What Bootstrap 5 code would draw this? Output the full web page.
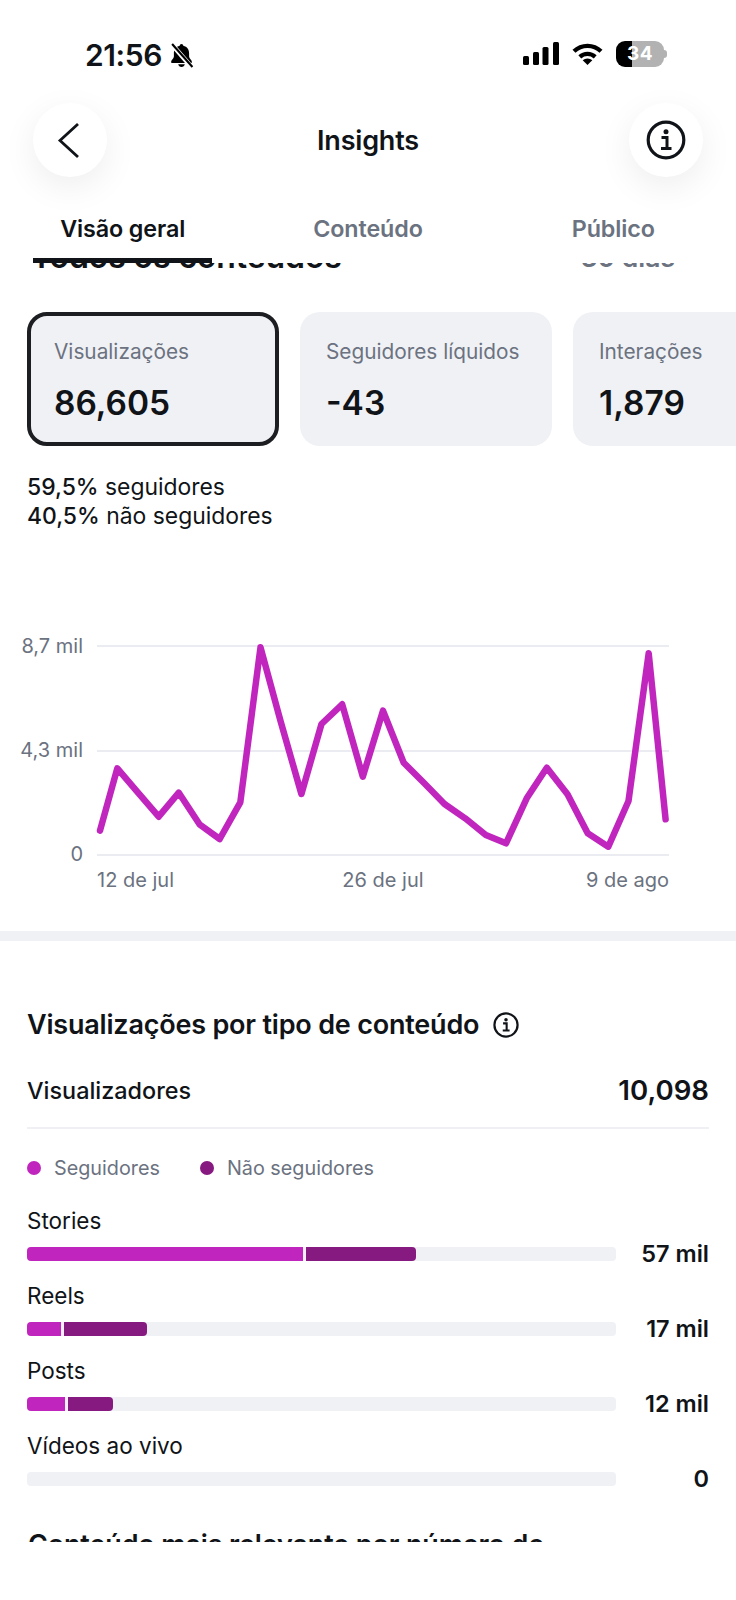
<!DOCTYPE html>
<html lang="pt">
<head>
<meta charset="utf-8">
<title>Insights</title>
<link href="https://cdn.jsdelivr.net/npm/bootstrap@5.3.0/dist/css/bootstrap.min.css" rel="stylesheet">
<style>
html,body{margin:0;background:#fff;}
body{font-family:Inter,"Liberation Sans",sans-serif;color:#101418;width:736px;height:1600px;overflow:hidden;}
.app-top{height:263px;position:relative;z-index:2;background:#fff;}
.stat-bar{height:95px;padding:41px 72px 0 85px;}
.stat-time{font-size:30px;font-weight:600;line-height:28px;letter-spacing:-.4px;margin-right:7px;}
.stat-right{gap:13px;}
.batt{width:48px;height:26px;border-radius:9px;background:linear-gradient(90deg,#000 34%,#b2b2b2 34%);color:#fff;font-size:19px;font-weight:700;line-height:26px;text-align:center;position:relative;letter-spacing:.5px;}
.batt::after{content:"";position:absolute;left:48px;top:9px;width:3px;height:8px;background:#b2b2b2;border-radius:0 3px 3px 0;}
.head-row{height:74px;margin-top:8px;padding:0 33px;}
.round-btn{width:74px;height:74px;border-radius:50%;background:#fff;box-shadow:0 10px 34px rgba(0,0,0,.07);border:0;padding:0;}
.head-title{font-size:27px;font-weight:600;letter-spacing:-.2px;padding-top:2px;}
.tab-row{margin-top:37px;}
.tab-item{flex:1 1 0;text-align:center;padding:0;}
.tab-lbl{display:block;font-size:23.3px;font-weight:600;line-height:30px;color:#6b7280;letter-spacing:-.1px;}
.tab-item.on .tab-lbl{color:#101418;}
.tab-bar{display:block;height:5px;width:179px;margin:14px 0 0 33px;background:#101418;}
.tab-gap{display:block;height:5px;margin-top:14px;}
.scroll-view{height:1280px;overflow:hidden;border-top:1px solid #eceef1;margin-top:-1px;position:relative;z-index:1;}
.top-cut{margin-top:-21px;padding:0 61px 0 31px;font-weight:600;line-height:30px;}
.top-cut .a{font-size:32px;letter-spacing:-.1px;}
.top-cut .b{font-size:26.5px;color:#6b7280;}
.kpi-row{margin-top:40px;padding-left:27px;gap:21px;overflow:hidden;}
.kpi{flex:0 0 252px;height:134px;border-radius:20px;background:#f0f1f5;padding:27px 26px 0 26px;}
.kpi.on{border:4px solid #1c1e21;padding:23px 22px 0 23px;}
.kpi-l{font-size:20.8px;line-height:26px;color:#6b7280;white-space:nowrap;}
.kpi-v{font-size:33.5px;font-weight:600;line-height:40px;margin-top:18px;}
.pct{margin:27px 0 0 27px;font-size:22.9px;line-height:29px;}
.pct b{font-weight:500;}
.chart-svg{display:block;margin-top:99px;}
.chart-svg text{font-family:Inter,"Liberation Sans",sans-serif;font-size:20px;fill:#6b7280;}
.band{height:10px;background:#f0f1f5;margin-top:0;}
.sec{padding:0 27px 0 28px;}
.sec-h{font-size:27px;font-weight:600;letter-spacing:-.2px;line-height:32px;margin-top:68px;gap:14px;margin-left:-1px;white-space:nowrap;}
.view-row{margin-top:34px;height:54px;border-bottom:2px solid #eff0f3;padding-bottom:21px;margin-left:-1px;}
.view-row .a{font-size:23.4px;font-weight:500;}
.view-row .b{font-size:27.6px;font-weight:600;}
.lgd{margin:24px 0 0 -1px;gap:40px;font-size:19.8px;line-height:30px;color:#6b7280;}
.dot{display:inline-block;width:14px;height:14px;border-radius:50%;margin-right:13px;}
.c1{background:#c026bd;}
.c2{background:#871a80;}
.bar-row{height:75px;}
.bar-name{font-size:22.5px;line-height:30px;margin-left:-1px;}
.bar-wrap{margin-left:-1px;margin-top:11px;height:14px;}
.bar-track{flex:0 0 589px;height:14px;background:#f0f1f5;border-radius:4px;gap:3px;overflow:hidden;}
.bar-seg{height:14px;}
.bar-val{flex:1 1 auto;text-align:right;font-size:23.5px;font-weight:600;line-height:24px;}
.rows{margin-top:23px;}
.bot-h{font-size:26.9px;font-weight:600;line-height:32px;margin-top:22px;letter-spacing:-.1px;white-space:nowrap;}
</style>
</head>
<body>
<div class="app-top">
  <div class="stat-bar d-flex justify-content-between align-items-start">
    <div class="d-flex align-items-center">
      <span class="stat-time">21:56</span>
      <svg width="25" height="25" viewBox="0 0 24 24" aria-hidden="true"><path d="M12 1c1 0 1.700.7 1.700 1.600 3.800.9 5.600 3.600 5.600 7.400v3c0 2 2.700 3.500 2.700 5.200 0 .7-.5 1.100-1.200 1.100H3.200c-.7 0-1.200-.4-1.200-1.100 0-1.700 2.700-3.200 2.700-5.200v-3c0-3.800 1.800-6.500 5.600-7.400C10.300 1.700 11 1 12 1Z" fill="#000"/><path d="M8.800 20.500h6.400c-.3 1.500-1.600 2.600-3.200 2.600s-2.900-1.100-3.200-2.600Z" fill="#000"/><path d="M2 .5 22 23.500" stroke="#fff" stroke-width="4.500"/><path d="M3 1 22.500 23" stroke="#000" stroke-width="2"/></svg>
    </div>
    <div class="stat-right d-flex align-items-start">
      <svg width="36" height="24" viewBox="0 0 36 24" aria-hidden="true" style="margin-top:1px"><g fill="#000"><rect x="0" y="14" width="6" height="9" rx="1.500"/><rect x="10" y="10" width="6" height="13" rx="1.500"/><rect x="19.500" y="5" width="6" height="18" rx="1.500"/><rect x="30" y="0" width="6" height="23" rx="1.500"/></g></svg>
      <svg width="31" height="24" viewBox="0 0 31 24" aria-hidden="true" style="margin-top:1px"><g fill="none" stroke="#000" stroke-width="4.300"><path d="M2 9.300A19.500 19.500 0 0 1 29 9.300"/><path d="M7.800 14.800A11.500 11.500 0 0 1 23.200 14.800"/></g><path d="M15.500 23 10.700 18.300A7 7 0 0 1 20.300 18.300Z" fill="#000"/></svg>
      <div class="batt">34</div>
    </div>
  </div>
  <div class="head-row d-flex justify-content-between align-items-center">
    <button class="round-btn d-flex align-items-center justify-content-center" type="button" aria-label="Voltar">
      <svg width="74" height="74" viewBox="0 0 74 74" aria-hidden="true"><path d="M45 21 27 37.500 45 54" fill="none" stroke="#101418" stroke-width="2.800"/></svg>
    </button>
    <div class="head-title">Insights</div>
    <button class="round-btn d-flex align-items-center justify-content-center" type="button" aria-label="Informações">
      <svg width="40" height="40" viewBox="0 0 40 40" aria-hidden="true"><circle cx="20" cy="20" r="17.800" fill="none" stroke="#101418" stroke-width="3.200"/><circle cx="20" cy="11.800" r="2.500" fill="#101418"/><path d="M15.500 17.500h5.500v10.500M15 28.500h10.500" fill="none" stroke="#101418" stroke-width="3"/></svg>
    </button>
  </div>
  <div class="tab-row d-flex">
    <div class="tab-item on"><span class="tab-lbl">Visão geral</span><span class="tab-bar"></span></div>
    <div class="tab-item"><span class="tab-lbl">Conteúdo</span><span class="tab-gap"></span></div>
    <div class="tab-item"><span class="tab-lbl">Público</span><span class="tab-gap"></span></div>
  </div>
</div>
<div class="scroll-view">
  <div class="top-cut d-flex justify-content-between">
    <span class="a">Todos os conteúdos</span><span class="b">30 dias</span>
  </div>
  <div class="kpi-row d-flex">
    <div class="kpi on"><div class="kpi-l">Visualizações</div><div class="kpi-v">86,605</div></div>
    <div class="kpi"><div class="kpi-l">Seguidores líquidos</div><div class="kpi-v">-43</div></div>
    <div class="kpi"><div class="kpi-l">Interações</div><div class="kpi-v">1,879</div></div>
  </div>
  <div class="pct"><b>59,5%</b> seguidores<br><b>40,5%</b> não seguidores</div>
  <svg class="chart-svg" width="736" height="301" viewBox="0 630 736 301" aria-label="Gráfico de visualizações">
    <g stroke="#eaecf1" stroke-width="2"><path d="M97 646H669"/><path d="M97 751H669"/><path d="M97 855H669"/></g>
    <text x="83" y="653" text-anchor="end">8,7 mil</text>
    <text x="83" y="757" text-anchor="end">4,3 mil</text>
    <text x="83" y="861" text-anchor="end">0</text>
    <text x="97" y="887">12 de jul</text>
    <text x="383" y="887" text-anchor="middle">26 de jul</text>
    <text x="669" y="887" text-anchor="end">9 de ago</text>
    <polyline fill="none" stroke="#c026bd" stroke-width="6.500" stroke-linejoin="round" stroke-linecap="round" points="100,830.700 117.300,768.300 138,792.700 158.700,816.700 178.800,792.700 199.500,824.300 219.700,839 240.300,802.300 260.500,647.300 280.700,721.700 301.400,794 321.500,724 342.200,704.300 362.800,776.700 383,710.700 403.700,762.700 424.300,783.300 444.500,804 465.200,818.300 485.800,835 506,843.300 526.700,798.300 546.800,767.700 567.500,794.300 587.700,833.300 608.300,846.700 628.500,801 648.700,653.300 665.600,819.300"/>
  </svg>
  <div class="band"></div>
  <div class="sec">
    <div class="sec-h d-flex align-items-center">
      <span>Visualizações por tipo de conteúdo</span>
      <svg width="26" height="26" viewBox="0 0 40 40" aria-hidden="true"><circle cx="20" cy="20" r="17.800" fill="none" stroke="#101418" stroke-width="3.400"/><circle cx="20" cy="11.800" r="2.700" fill="#101418"/><path d="M15.500 17.500h5.500v10.500M15 28.500h10.500" fill="none" stroke="#101418" stroke-width="3.200"/></svg>
    </div>
    <div class="view-row d-flex justify-content-between align-items-center"><span class="a">Visualizadores</span><span class="b">10,098</span></div>
    <div class="lgd d-flex">
      <span class="d-flex align-items-center"><i class="dot c1"></i>Seguidores</span>
      <span class="d-flex align-items-center"><i class="dot c2"></i>Não seguidores</span>
    </div>
    <div class="rows">
      <div class="bar-row"><div class="bar-name">Stories</div><div class="bar-wrap d-flex align-items-center"><div class="bar-track d-flex"><div class="bar-seg c1" style="width:276px"></div><div class="bar-seg c2" style="width:110px;border-radius:0 4px 4px 0"></div></div><div class="bar-val">57 mil</div></div></div>
      <div class="bar-row"><div class="bar-name">Reels</div><div class="bar-wrap d-flex align-items-center"><div class="bar-track d-flex"><div class="bar-seg c1" style="width:34px"></div><div class="bar-seg c2" style="width:83px;border-radius:0 4px 4px 0"></div></div><div class="bar-val">17 mil</div></div></div>
      <div class="bar-row"><div class="bar-name">Posts</div><div class="bar-wrap d-flex align-items-center"><div class="bar-track d-flex"><div class="bar-seg c1" style="width:38px"></div><div class="bar-seg c2" style="width:45px;border-radius:0 4px 4px 0"></div></div><div class="bar-val">12 mil</div></div></div>
      <div class="bar-row"><div class="bar-name">Vídeos ao vivo</div><div class="bar-wrap d-flex align-items-center"><div class="bar-track d-flex"></div><div class="bar-val">0</div></div></div>
    </div>
    <div class="bot-h">Conteúdo mais relevante por número de</div>
  </div>
</div>
<script src="https://cdn.jsdelivr.net/npm/bootstrap@5.3.0/dist/js/bootstrap.bundle.min.js"></script>
</body>
</html>
